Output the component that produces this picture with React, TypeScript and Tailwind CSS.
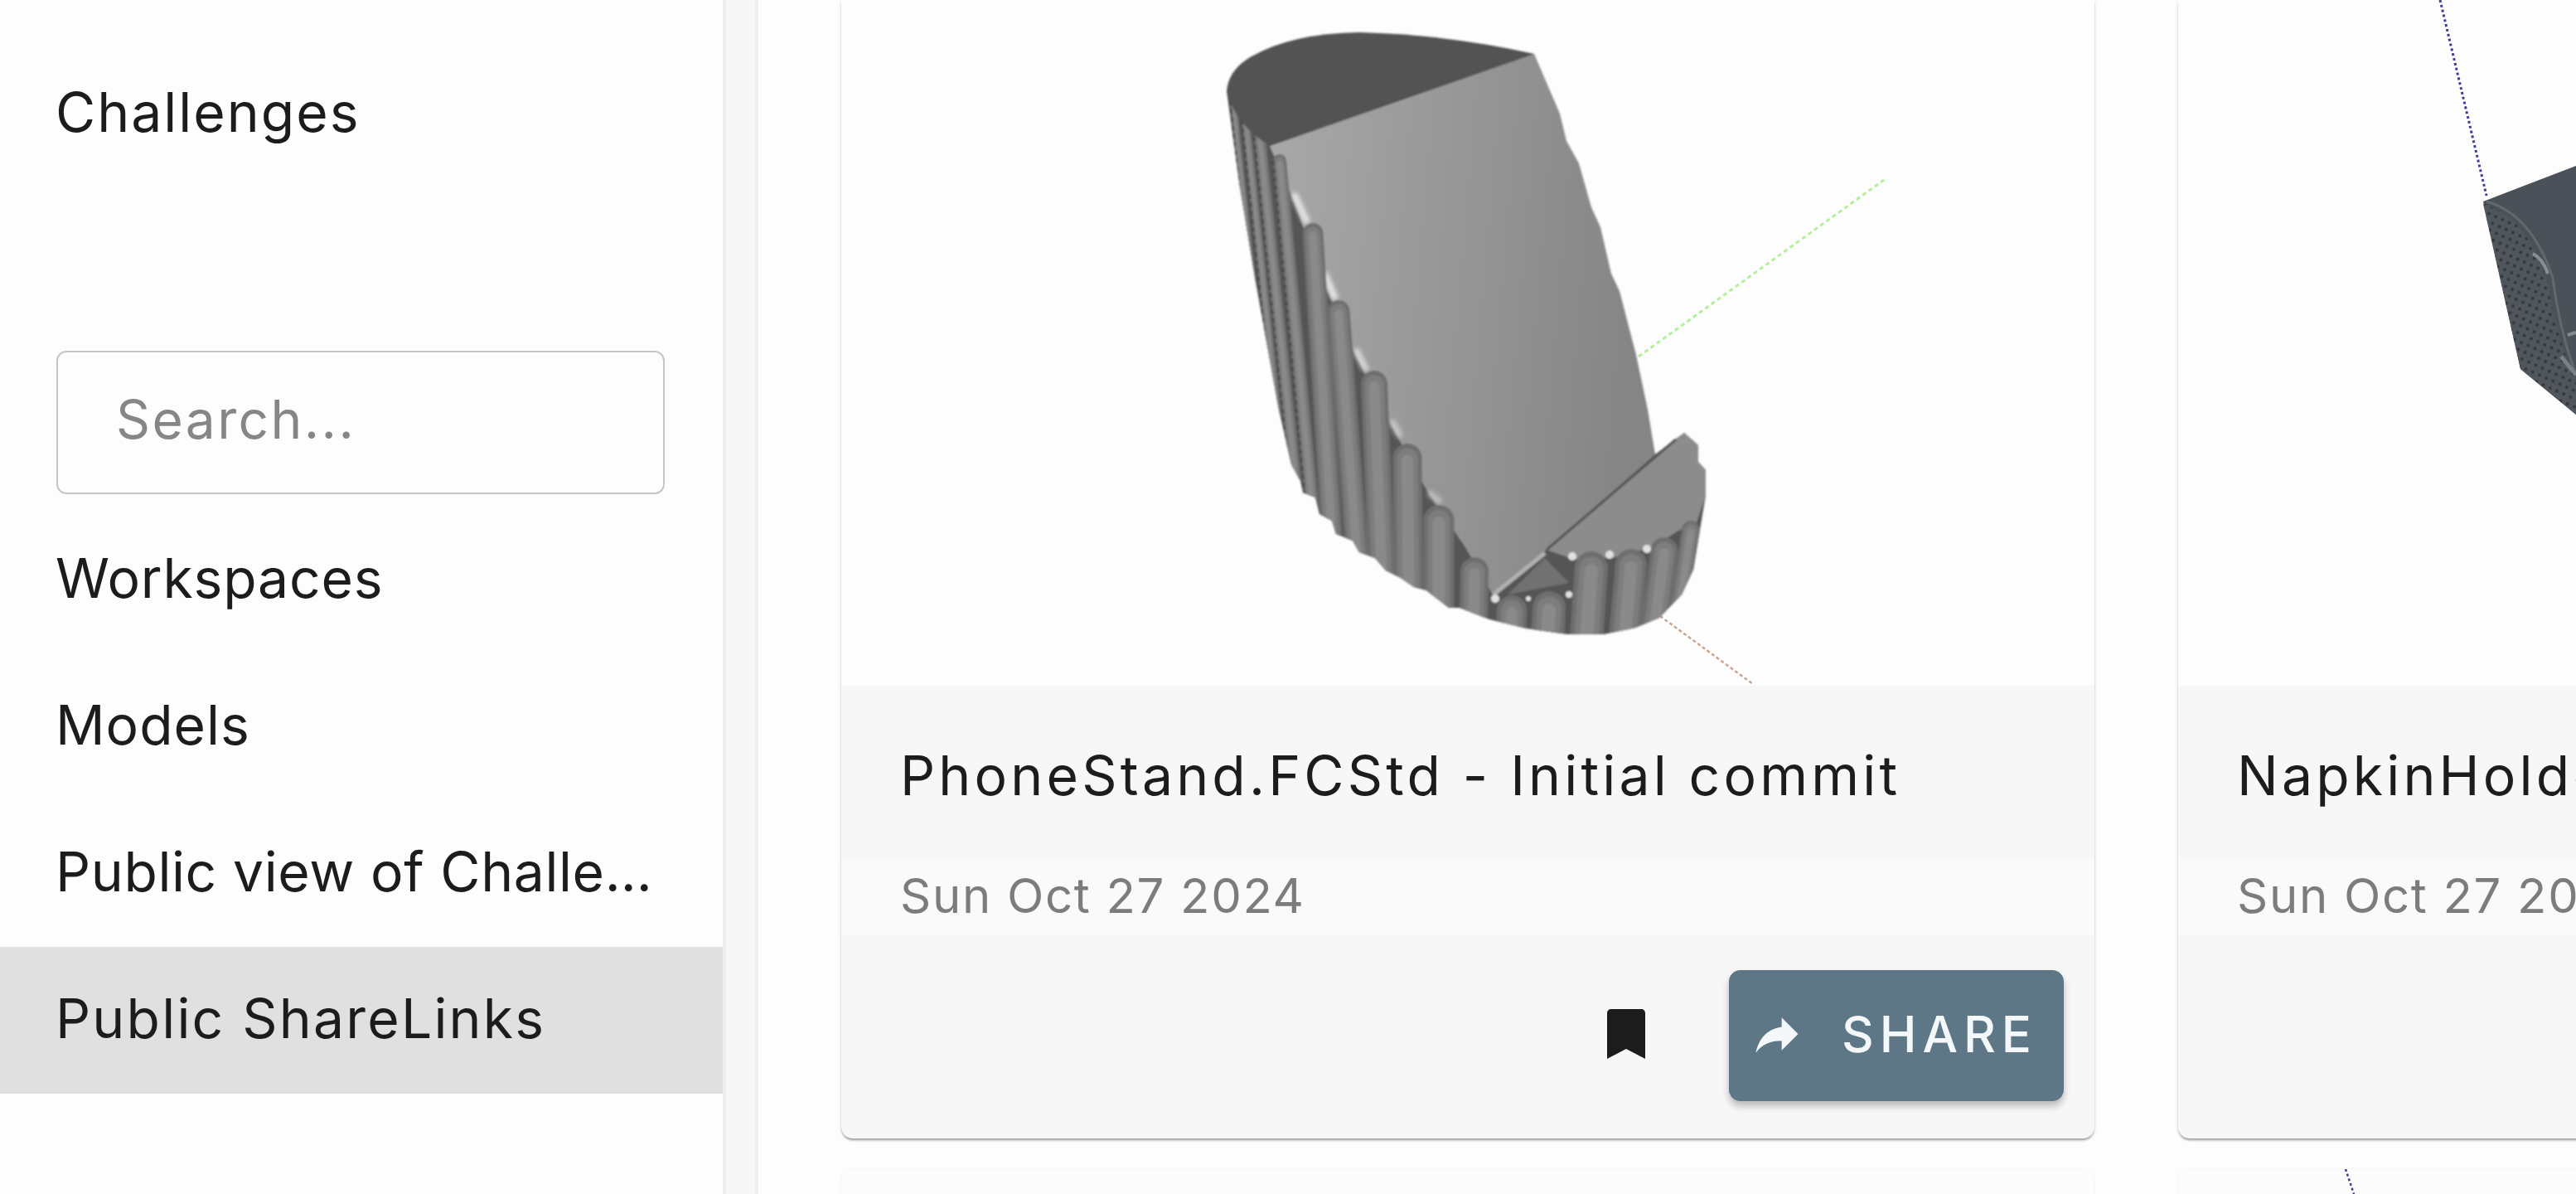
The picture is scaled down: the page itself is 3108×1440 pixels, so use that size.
const navFont = "font-['Inter',sans-serif]";

// arches of the phone stand's flutes: [x, y, width, tilt], page coordinates
const flutes: number[][] = [
  [1488, 118, 8, 0.107],
  [1503, 140, 10, 0.107],
  [1520, 158, 14, 0.104],
  [1544, 186, 16, 0.094],
  [1584, 269, 25, 0.063],
  [1615, 362, 27, 0.076],
  [1658, 447, 32, 0.04],
  [1698, 535, 35, 0.01],
  [1736, 609, 37, 0],
  [1779, 672, 34, -0.02],
  [1824, 718, 36, -0.03],
  [1869, 713, 40, -0.05],
  [1920, 665, 40, -0.07],
  [1968, 662, 38, -0.09],
  [2008, 648, 33, -0.13],
  [2040, 628, 22, -0.15],
];

const silhouette =
  "M1480 110 L1851 65 L1997 548 L2032 522 L2049 537 L2049 557 L2058 567 L2058 597 L2043 687 L2029 717 L2002 745 L1973 757 L1935 765 L1891 765 L1842 758 L1797 747 L1761 733 L1748 733 L1721 712 L1706 708 L1690 697 L1672 688 L1659 673 L1640 666 L1632 652 L1612 644 L1607 628 L1592 620 L1587 600 L1572 594 L1569 580 L1558 560 L1543 494 L1515 340 L1495 219 Z";

const highlights = [
  { x1: 1562, y1: 236, x2: 1576, y2: 266, opacity: 1 },
  { x1: 1599, y1: 332, x2: 1610, y2: 358, opacity: 1 },
  { x1: 1637, y1: 424, x2: 1647, y2: 444, opacity: 0.8 },
  { x1: 1680, y1: 510, x2: 1688, y2: 524, opacity: 0.6 },
  { x1: 1726, y1: 596, x2: 1736, y2: 604, opacity: 0.5 },
];

function PhoneStand() {
  return (
    <svg viewBox="1015 0 1512 827" className="block h-full w-full">
      <defs>
        <linearGradient id="standFace" x1="0" y1="0" x2="1" y2="0.12">
          <stop offset="0" stopColor="#a9a9a9" />
          <stop offset="1" stopColor="#858585" />
        </linearGradient>
        <clipPath id="standClip">
          <path d={silhouette} />
        </clipPath>
        <filter id="soft">
          <feGaussianBlur stdDeviation="1.1" />
        </filter>
        <filter id="softer">
          <feGaussianBlur stdDeviation="2.4" />
        </filter>
      </defs>
      <line x1="1977" y1="430" x2="2273" y2="217" stroke="#b4f09a" strokeWidth="3" strokeDasharray="5 4" />
      <line x1="2003" y1="743" x2="2115" y2="825" stroke="#c9a592" strokeWidth="2.5" strokeDasharray="4 3" />
      <g filter="url(#soft)">
        <path d={silhouette} fill="#555" />
        <path
          d="M1851 65 L1882 137 L1890 170 L1905 197 L1920 250 L1931 274 L1944 330 L1954 351 L1974 428 L1988 494 L1997 548 L1866 663 L1802 719 L1768 660 L1724 596 L1677 510 L1634 425 L1597 340 L1560 240 L1532 176 Z"
          fill="url(#standFace)"
        />
        <path
          d="M1866 663 L2032 522 L2049 537 L2049 557 L2058 567 L2058 597 L2047 630 L2025 640 L1994 660 L1949 672 L1900 675 Z"
          fill="#8c8c8c"
        />
        <g filter="url(#softer)" stroke="#e6e6e6" strokeWidth="8" strokeLinecap="round">
          {highlights.map((h, i) => (
            <line key={i} x1={h.x1} y1={h.y1} x2={h.x2} y2={h.y2} opacity={h.opacity} />
          ))}
        </g>
        <g clipPath="url(#standClip)">
          {flutes.map(([x, y, w, tilt], i) => {
            const y1 = y + w / 2;
            const x2 = x + (800 - y1) * tilt;
            return (
              <g key={i} strokeLinecap="round" fill="none">
                <line x1={x} y1={y1} x2={x2} y2={800} stroke="#6e6e6e" strokeWidth={w} />
                <line x1={x} y1={y1 + 1} x2={x2} y2={800} stroke="#7d7d7d" strokeWidth={w * 0.74} />
                <line x1={x} y1={y1 + 3} x2={x2} y2={800} stroke="#8a8a8a" strokeWidth={w * 0.4} />
                {i < 4 && (
                  <line
                    x1={x - w / 2}
                    y1={y1}
                    x2={x2 - w / 2}
                    y2={800}
                    stroke="#4a4a4a"
                    strokeWidth="3"
                    strokeLinecap="butt"
                    strokeDasharray="5 5"
                  />
                )}
              </g>
            );
          })}
        </g>
        <path
          d="M1480 110 Q1482 84 1510 68 Q1560 40 1640 39 Q1750 42 1851 65 L1532 176 Q1490 150 1480 110 Z"
          fill="#525252"
        />
        <path d="M1864 673 L1893 703 L1819 717 Z" fill="#717171" />
        <line x1="1866" y1="663" x2="2022" y2="530" stroke="#555" strokeWidth="3" />
        <line x1="1802" y1="717" x2="1864" y2="667" stroke="#b0b0b0" strokeWidth="5" />
        <g fill="#e2e2e2">
          <circle cx="1804" cy="722" r="5" />
          <circle cx="1844" cy="722" r="3" />
          <circle cx="1893" cy="717" r="4" />
          <circle cx="1897" cy="671" r="5" />
          <circle cx="1942" cy="669" r="5" />
          <circle cx="1987" cy="662" r="5" />
        </g>
      </g>
    </svg>
  );
}

function NapkinHolder() {
  return (
    <svg viewBox="2628 0 1512 827" className="block h-full w-full">
      <defs>
        <pattern id="knurl" width="9" height="9" patternUnits="userSpaceOnUse" patternTransform="rotate(24)">
          <rect width="9" height="9" fill="#50565c" />
          <circle cx="4" cy="4" r="2" fill="#33383d" />
        </pattern>
      </defs>
      <line x1="2944" y1="0" x2="3000" y2="236" stroke="#3d3d9c" strokeWidth="3" strokeDasharray="3 3" />
      <path d="M2996 243 L3108 200 L3108 500 L3041 445 Z" fill="#4b5158" />
      <path d="M2996 246 Q3050 262 3074 340 Q3082 400 3108 459 L3108 500 L3041 445 Z" fill="url(#knurl)" />
      <path d="M3000 243 Q3054 258 3080 335 Q3088 398 3108 452" stroke="#62686e" strokeWidth="3" fill="none" />
      <path d="M3056 306 Q3068 312 3074 330" stroke="#8a8f94" strokeWidth="4" fill="none" />
      <path d="M3098 404 L3108 401" stroke="#868b90" strokeWidth="4" />
      <path d="M3090 430 L3108 452" stroke="#7b8085" strokeWidth="5" />
    </svg>
  );
}

function BookmarkIcon() {
  return (
    <svg width="46" height="60" viewBox="0 0 46 60" aria-hidden="true" className="-mt-[8px]">
      <path d="M5 0 H41 C44 0 46 2 46 5 V60 L23 48 L0 60 V5 C0 2 2 0 5 0 Z" fill="#1c1c1c" />
    </svg>
  );
}

function ShareIcon() {
  return (
    <svg width="68" height="68" viewBox="0 0 24 24" aria-hidden="true" className="shrink-0">
      <path d="M14 9V5l7 7-7 7v-4.1c-5 0-8.5 1.6-11 5.1 1-5 4-10 11-11z" fill="#f5f8fa" />
    </svg>
  );
}

function ModelCard({ title, showActions, children }: { title: string; showActions?: boolean; children: React.ReactNode }) {
  return (
    <div className="w-[1512px] h-[1373px] shrink-0 flex flex-col rounded-b-[14px] bg-[#f7f7f7] shadow-[0_3px_3px_-1px_rgba(0,0,0,0.38),0_0_5px_rgba(0,0,0,0.1)] overflow-hidden">
      <div className="h-[827px] bg-[#fdfdfd]">{children}</div>
      <div className="h-[208px] flex items-center px-[71px] pt-[8px] text-[66px] tracking-[4.2px] text-[#1c1c1c] whitespace-nowrap">
        {title}
      </div>
      <div className="h-[93px] flex items-center px-[71px] pb-[2px] text-[58px] tracking-[1.7px] text-[#7c7c7c] bg-[#fafafa] whitespace-nowrap">
        Sun Oct 27 2024
      </div>
      <div className="flex-1 flex items-center justify-end pr-[37px]">
        {showActions && (
          <>
            <BookmarkIcon />
            <button className="ml-[101px] w-[404px] h-[158px] -mt-[4px] flex items-center pl-[24px] pb-[4px] rounded-[14px] bg-[#5e7787] text-[#f5f8fa] text-[60px] font-medium tracking-[7px] shadow-[0_6px_8px_rgba(0,0,0,0.25)]">
              <ShareIcon />
              <span className="ml-[44px]">SHARE</span>
            </button>
          </>
        )}
      </div>
    </div>
  );
}

const navItems = [
  { label: "Workspaces", tracking: "tracking-[0.8px]" },
  { label: "Models", tracking: "tracking-[1px]" },
  { label: "Public view of Challenges", tracking: "tracking-[0.6px]" },
  { label: "Public ShareLinks", tracking: "tracking-[2.2px]" },
];

export default function App() {
  return (
    <div className={`flex w-[3108px] h-[1440px] overflow-hidden bg-[#fdfdfd] blur-[0.7px] ${navFont}`}>
      <aside className="w-[872px] shrink-0 pt-[47px] bg-[#fdfdfd] text-[66px] text-[#1c1c1c]">
        <div className="h-[176px] flex items-center px-[67px] tracking-[2px]">Challenges</div>
        <div className="mt-[200px] pl-[68px] pr-[70px]">
          <input
            placeholder="Search..."
            className="w-full h-[173px] pl-[70px] pb-[8px] rounded-[12px] border-2 border-[#c6c6c6] bg-transparent text-[64px] tracking-[2.4px] placeholder:text-[#868686] outline-none"
          />
        </div>
        <nav className="mt-[15px]">
          {navItems.map((item) => (
            <div
              key={item.label}
              className={`h-[177px] flex items-center pl-[67px] pr-[79px] pb-[4px] ${item.tracking} ${item.label === "Public ShareLinks" ? "bg-[#e0e0e0]" : ""}`}
            >
              <span className="truncate">{item.label}</span>
            </div>
          ))}
        </nav>
      </aside>
      <div className="w-[43px] shrink-0 bg-[#f7f7f7] border-x-4 border-[#efefef]" />
      <main className="flex-1 pl-[100px] min-w-0">
        <div className="flex gap-[101px]">
          <ModelCard title="PhoneStand.FCStd - Initial commit" showActions>
            <PhoneStand />
          </ModelCard>
          <ModelCard title="NapkinHolder.FCStd - Initial commit">
            <NapkinHolder />
          </ModelCard>
        </div>
        <div className="flex gap-[101px] mt-[37px]">
          <div className="w-[1512px] h-[100px] shrink-0 rounded-t-[14px] bg-[#fcfcfc] shadow-[0_0_3px_rgba(0,0,0,0.07)]" />
          <div className="w-[1512px] h-[100px] shrink-0 rounded-t-[14px] bg-[#fcfcfc] shadow-[0_0_3px_rgba(0,0,0,0.07)]">
            <svg viewBox="2628 1410 1512 100" className="block h-full w-full">
              <line x1="2830" y1="1410" x2="2840" y2="1440" stroke="#3d3d9c" strokeWidth="2.5" strokeDasharray="3 3" />
            </svg>
          </div>
        </div>
      </main>
    </div>
  );
}
